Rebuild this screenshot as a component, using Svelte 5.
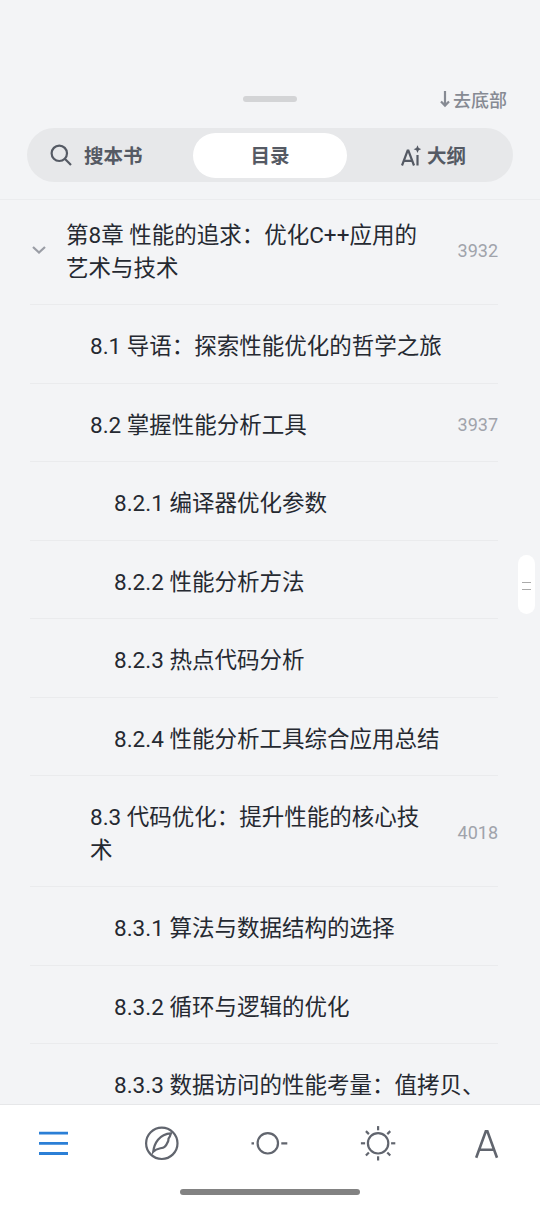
<script lang="ts">
  interface Chapter {
    title: string;
    level: number;
    page?: number;
    expanded?: boolean;
  }

  const chapters: Chapter[] = [
    { title: "第8章 性能的追求：优化C++应用的艺术与技术", level: 1, page: 3932, expanded: true },
    { title: "8.1 导语：探索性能优化的哲学之旅", level: 2 },
    { title: "8.2 掌握性能分析工具", level: 2, page: 3937 },
    { title: "8.2.1 编译器优化参数", level: 3 },
    { title: "8.2.2 性能分析方法", level: 3 },
    { title: "8.2.3 热点代码分析", level: 3 },
    { title: "8.2.4 性能分析工具综合应用总结", level: 3 },
    { title: "8.3 代码优化：提升性能的核心技术", level: 2, page: 4018 },
    { title: "8.3.1 算法与数据结构的选择", level: 3 },
    { title: "8.3.2 循环与逻辑的优化", level: 3 },
    { title: "8.3.3 数据访问的性能考量：值拷贝、", level: 3 },
  ];

  const rays = [0, 45, 90, 135, 180, 225, 270, 315];
</script>

<div class="reader">
  <header class="header">
    <div class="top-row">
      <span class="drag-bar"></span>
      <button class="to-bottom">
        <svg width="10" height="18" viewBox="0 0 10 18">
          <path d="M5 1V15.5M1 11.5L5 15.6L9 11.5" />
        </svg>
        <span>去底部</span>
      </button>
    </div>
    <div class="tabs">
      <button class="tab search">
        <svg width="24" height="24" viewBox="0 0 24 24">
          <circle cx="10.3" cy="9.3" r="7.7" />
          <path d="M15.8 14.8L22 21" />
        </svg>
        <span>搜本书</span>
      </button>
      <button class="tab active"><span>目录</span></button>
      <button class="tab outline">
        <svg width="20" height="22" viewBox="0 0 20 22">
          <path d="M1 20.5L6.6 5.7H7.4L13 20.5M3.1 15.8H10.9M16.5 10V20.5" />
          <path class="star" d="M16.5 0.3L17.7 3.1L20.4 4.2L17.7 5.3L16.5 8.1L15.3 5.3L12.6 4.2L15.3 3.1Z" />
        </svg>
        <span>大纲</span>
      </button>
    </div>
  </header>

  <main class="catalog">
    {#each chapters as chapter}
      <div class="chapter level-{chapter.level}">
        {#if chapter.expanded}
          <svg class="chevron" width="14" height="9" viewBox="0 0 14 9">
            <path d="M1 1L7 6.6L13 1" />
          </svg>
        {/if}
        <span class="title">{chapter.title}</span>
        {#if chapter.page}
          <span class="page">{chapter.page}</span>
        {/if}
      </div>
    {/each}
  </main>

  <div class="scroll-handle">
    <span></span>
    <span></span>
  </div>

  <footer class="footer">
    <nav class="toolbar">
      <button class="tool current" aria-label="目录">
        <svg width="40" height="40" viewBox="0 0 40 40">
          <path d="M6 10.2H35M6 20.4H35M6 30.5H35" />
        </svg>
      </button>
      <button class="tool" aria-label="发现">
        <svg width="40" height="40" viewBox="0 0 40 40">
          <circle cx="19.8" cy="20.3" r="15.7" />
          <path d="M11.2 28.8C12.2 20.5 17.1 11 29 10.3C28.5 12.2 27.7 14 26.5 15.6L26.3 17.8C25.2 20.4 24.5 22.4 22.6 23.8C19.8 25.8 15 24.9 11.2 28.8Z" />
        </svg>
      </button>
      <button class="tool" aria-label="进度">
        <svg width="40" height="40" viewBox="0 0 40 40">
          <circle cx="17.8" cy="20.3" r="10.2" />
          <path d="M1.5 20.3H4M31.3 20.3H37.3" />
        </svg>
      </button>
      <button class="tool" aria-label="亮度">
        <svg width="40" height="40" viewBox="0 0 40 40">
          <g transform="translate(-0.9 0.3)">
            <circle cx="20" cy="20" r="10.2" />
            {#each rays as angle}
              <path d="M20 2.8V7" transform="rotate({angle} 20 20)" />
            {/each}
          </g>
        </svg>
      </button>
      <button class="tool" aria-label="字体">
        <svg class="font-icon" width="40" height="40" viewBox="0 0 40 40">
          <path d="M9.2 34.8L18.8 8.2H20.4L30 34.8M12.8 26.8H26.4" />
        </svg>
      </button>
    </nav>
    <div class="home-bar"></div>
  </footer>
</div>

<style>
  :global(body) {
    margin: 0;
    background: #f3f4f6;
  }

  .reader {
    position: relative;
    display: flex;
    flex-direction: column;
    width: 540px;
    height: 1206px;
    overflow: hidden;
    background: #f3f4f6;
    color: #252931;
    font-family: Roboto, "Noto Sans CJK SC", sans-serif;
  }

  button {
    padding: 0;
    border: none;
    background: none;
    color: inherit;
    font: inherit;
  }

  svg {
    display: block;
    flex: none;
    fill: none;
    stroke: currentColor;
    stroke-width: 2.2;
  }

  .header {
    flex: none;
    box-sizing: border-box;
    height: 200px;
    padding: 84px 27px 0;
    border-bottom: 1px solid #ebecee;
  }

  .top-row {
    display: grid;
    grid-template-columns: 1fr 54px 1fr;
    align-items: center;
    height: 30px;
  }

  .drag-bar {
    grid-column: 2;
    height: 6px;
    margin-bottom: 1px;
    border-radius: 3px;
    background: #d3d4d6;
  }

  .to-bottom {
    display: flex;
    align-items: center;
    justify-self: end;
    gap: 3px;
    margin-right: 6px;
    color: #868a93;
    font-size: 18px;
    font-weight: 500;
    line-height: 27px;
  }

  .to-bottom span {
    padding-top: 3px;
  }

  .tabs {
    display: flex;
    box-sizing: border-box;
    height: 54px;
    margin-top: 14px;
    padding: 5px 13px 4px;
    border-radius: 27px;
    background: #e7e8ea;
    color: #555a64;
    font-size: 19.5px;
    font-weight: 700;
  }

  .tab {
    display: flex;
    align-items: center;
    justify-content: center;
    width: 153px;
    line-height: 43px;
  }

  .tab span {
    padding-top: 2px;
  }

  .tab.active {
    width: 154px;
    border-radius: 23px;
    background: #fff;
  }

  .search {
    box-sizing: border-box;
    justify-content: flex-start;
    gap: 11px;
    padding-left: 9px;
  }

  .outline {
    gap: 6px;
    padding-left: 20px;
  }

  .outline .star {
    fill: currentColor;
    stroke: none;
  }

  .catalog {
    flex: 1;
    min-height: 0;
    overflow: hidden;
    padding: 0 42px 0 30px;
  }

  .chapter {
    display: flex;
    align-items: center;
    box-sizing: border-box;
    padding: 25px 0 20px;
    border-bottom: 1px solid #eaebed;
    font-size: 22.5px;
    line-height: 32.5px;
  }

  /* the list is scrolled a little under the header */
  .chapter:first-child {
    margin-top: -6px;
  }

  .level-1 {
    padding-left: 2px;
  }

  .level-2 {
    padding-left: 60px;
  }

  .level-3 {
    padding-left: 84px;
  }

  .chevron {
    margin: 0 20px 2px 0;
    color: #9a9da5;
  }

  .title {
    flex: 1;
  }

  .page {
    margin-left: 24px;
    color: #a0a3ab;
    font-size: 18px;
  }

  .scroll-handle {
    position: absolute;
    top: 555px;
    right: 5px;
    display: flex;
    flex-direction: column;
    align-items: center;
    justify-content: center;
    gap: 6px;
    box-sizing: border-box;
    width: 17px;
    height: 59px;
    padding-top: 3px;
    border-radius: 9px;
    background: #fff;
  }

  .scroll-handle span {
    width: 9px;
    height: 1px;
    background: #aaa;
  }

  .footer {
    flex: none;
    box-sizing: border-box;
    height: 102px;
    border-top: 1px solid #e6e7e9;
    background: #fff;
  }

  .toolbar {
    display: flex;
    justify-content: space-between;
    padding: 18px 33px 0;
    color: #61656e;
  }

  .tool.current {
    color: #2b7fd6;
  }

  .tool.current svg {
    stroke-width: 2.8;
  }

  .font-icon {
    stroke-width: 2.6;
  }

  .home-bar {
    width: 180px;
    height: 6px;
    margin: 26px auto 0;
    border-radius: 3px;
    background: #828282;
  }
</style>
